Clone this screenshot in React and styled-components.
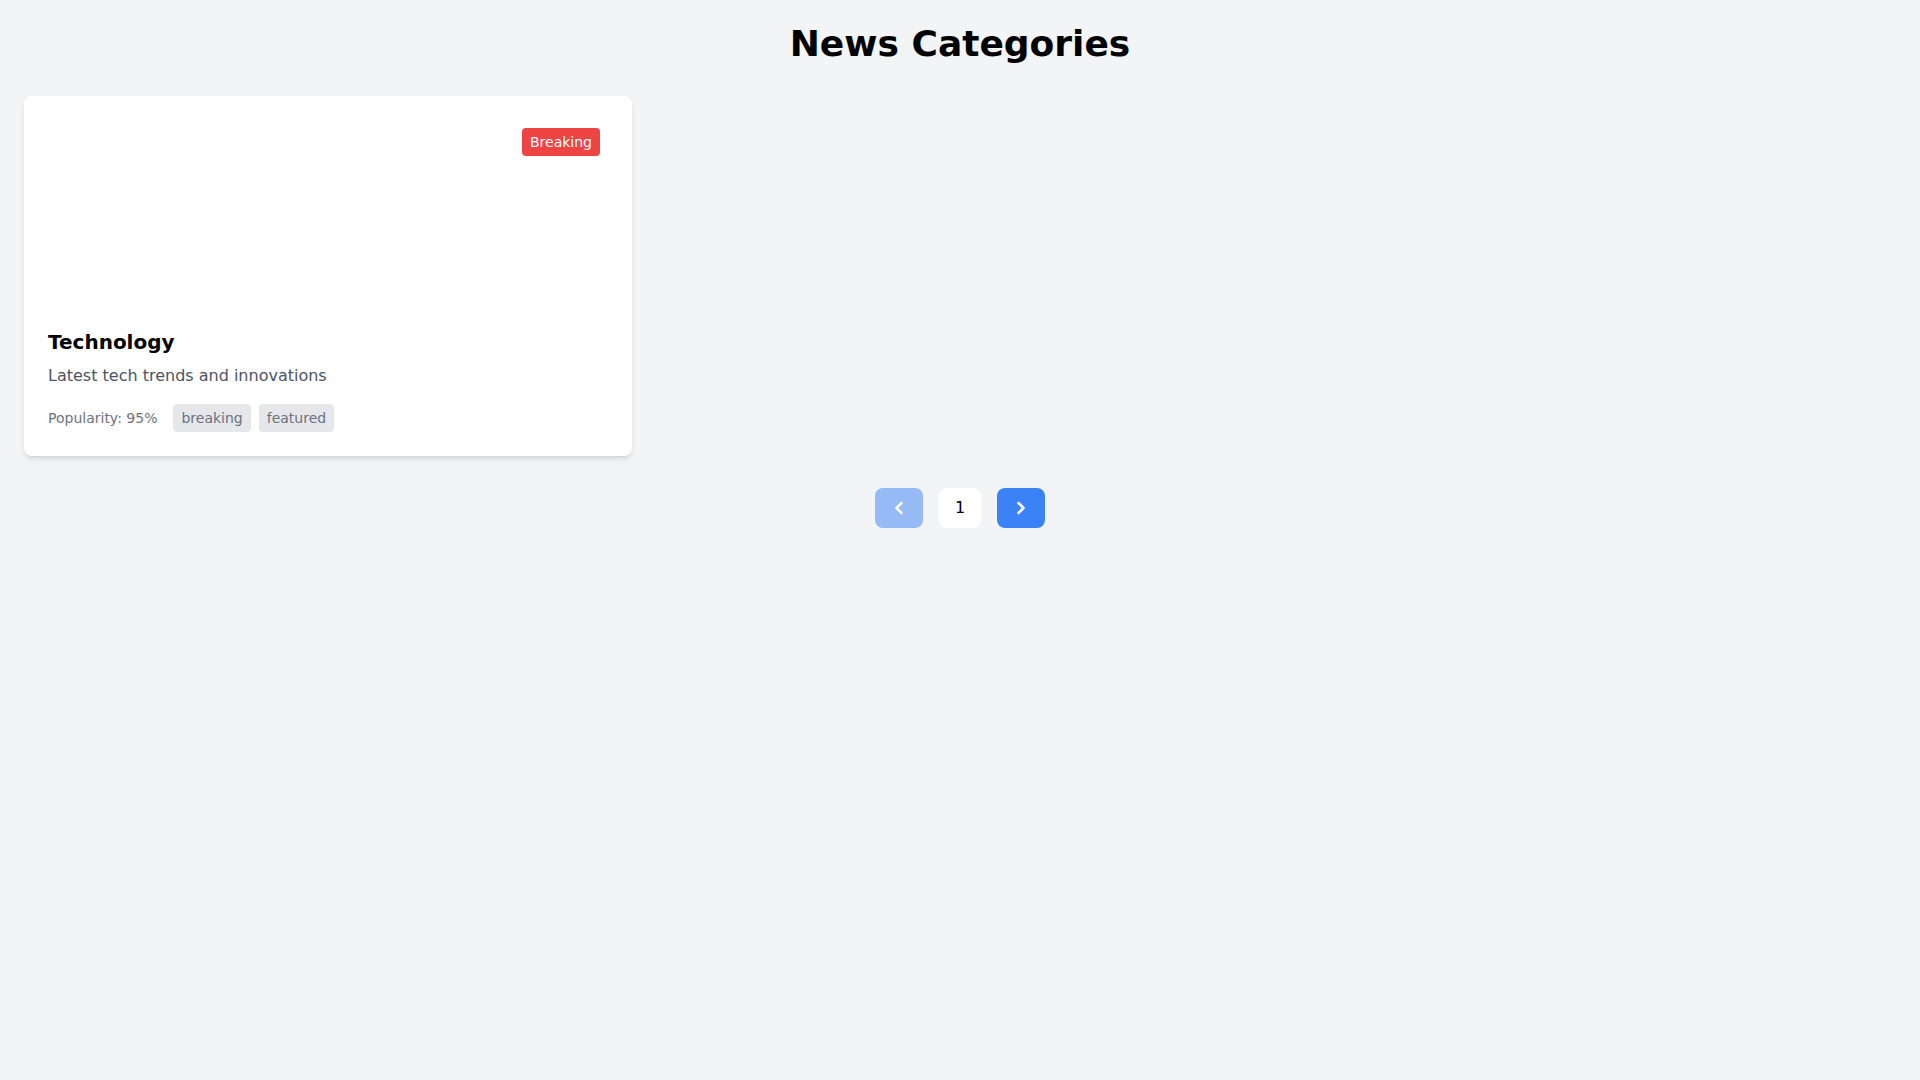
import React, { useState } from 'react';
import styled, { createGlobalStyle } from 'styled-components';
import { ChevronLeft, ChevronRight } from 'lucide-react';

const GlobalStyle = createGlobalStyle`
  html, body {
    margin: 0;
    padding: 0;
    background: #f3f4f6;
  }
  body {
    font-family: "DejaVu Sans", "Liberation Sans", sans-serif;
    color: #111827;
  }
  * { box-sizing: border-box; }
`;

const categories = [
  {
    id: 1,
    name: 'Technology',
    description: 'Latest tech trends and innovations',
    popularity: 95,
    badge: 'Breaking',
    tags: ['breaking', 'featured'],
  },
];

const Page = styled.div`
  min-height: 100vh;
  padding: 24px;
`;

const Title = styled.h1`
  margin: 0 0 32px;
  font-size: 36px;
  line-height: 40px;
  font-weight: 700;
  text-align: center;
  color: #000;
`;

const Grid = styled.div`
  display: grid;
  grid-template-columns: repeat(3, 1fr);
  gap: 24px;
  margin-bottom: 32px;
`;

const Card = styled.div`
  background: #fff;
  border-radius: 8px;
  overflow: hidden;
  box-shadow: 0 4px 6px -1px rgba(0, 0, 0, 0.1), 0 2px 4px -2px rgba(0, 0, 0, 0.1);
`;

const Cover = styled.div`
  position: relative;
  height: 208px;
  background: #fff;
`;

const Badge = styled.span`
  position: absolute;
  top: 32px;
  right: 32px;
  background: #ef4444;
  color: #fff;
  font-size: 14px;
  line-height: 20px;
  padding: 4px 8px;
  border-radius: 4px;
`;

const Body = styled.div`
  padding: 24px;
`;

const Name = styled.h2`
  margin: 0 0 8px;
  font-size: 20px;
  line-height: 28px;
  font-weight: 700;
  color: #000;
`;

const Description = styled.p`
  margin: 0 0 16px;
  font-size: 16px;
  line-height: 24px;
  color: #4b5563;
`;

const Meta = styled.div`
  display: flex;
  align-items: center;
  gap: 16px;
`;

const Popularity = styled.span`
  font-size: 14px;
  line-height: 20px;
  color: #6b7280;
`;

const Tags = styled.div`
  display: flex;
  gap: 8px;
`;

const Tag = styled.span`
  background: #e5e7eb;
  color: #6b7280;
  font-size: 14px;
  line-height: 20px;
  padding: 4px 8px;
  border-radius: 4px;
`;

const Pager = styled.div`
  display: flex;
  justify-content: center;
  align-items: center;
  gap: 16px;
`;

const ArrowButton = styled.button`
  width: 48px;
  height: 40px;
  display: flex;
  align-items: center;
  justify-content: center;
  border: none;
  border-radius: 8px;
  background: #3b82f6;
  color: #fff;
  cursor: pointer;
  opacity: ${(p) => (p.disabled ? 0.5 : 1)};
  padding: 0;
`;

const PageButton = styled.button`
  height: 40px;
  padding: 0 16px;
  border: none;
  border-radius: 8px;
  background: ${(p) => (p.active ? '#fff' : 'transparent')};
  color: #000;
  font-family: inherit;
  font-size: 16px;
  line-height: 24px;
  cursor: pointer;
`;

export default function App() {
  const [page, setPage] = useState(1);
  const totalPages = 1;

  return (
    <>
      <GlobalStyle />
      <Page>
        <Title>News Categories</Title>
        <Grid>
          {categories.map((cat) => (
            <Card key={cat.id}>
              <Cover>{cat.badge && <Badge>{cat.badge}</Badge>}</Cover>
              <Body>
                <Name>{cat.name}</Name>
                <Description>{cat.description}</Description>
                <Meta>
                  <Popularity>Popularity: {cat.popularity}%</Popularity>
                  <Tags>
                    {cat.tags.map((t) => (
                      <Tag key={t}>{t}</Tag>
                    ))}
                  </Tags>
                </Meta>
              </Body>
            </Card>
          ))}
        </Grid>
        <Pager>
          <ArrowButton disabled={page === 1} onClick={() => setPage(page - 1)}>
            <ChevronLeft size={20} strokeWidth={3} />
          </ArrowButton>
          <PageButton active>{page}</PageButton>
          <ArrowButton onClick={() => page < totalPages && setPage(page + 1)}>
            <ChevronRight size={20} strokeWidth={3} />
          </ArrowButton>
        </Pager>
      </Page>
    </>
  );
}
